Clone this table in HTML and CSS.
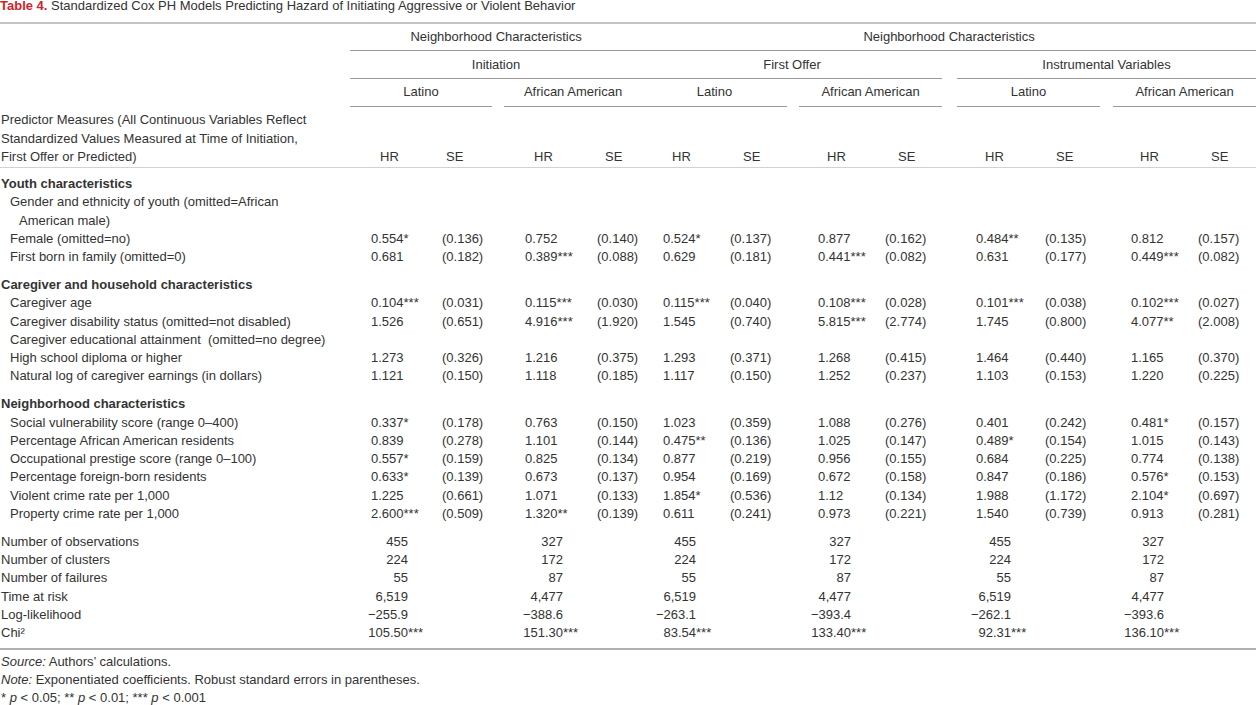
FILE: index.html
```html
<!DOCTYPE html>
<html lang="en">
<head>
<meta charset="utf-8">
<title>Table 4</title>
<link rel="stylesheet" href="styles.css">
</head>
<body>
<p class="caption"><span class="tlabel">Table 4.</span> Standardized Cox PH Models Predicting Hazard of Initiating Aggressive or Violent Behavior</p>
<table class="results">
  <colgroup>
    <col class="w-label">
    <col class="w-hr1"><col class="w-se1">
    <col class="w-hr2"><col class="w-se2">
    <col class="w-hr3"><col class="w-se3">
    <col class="w-hr4"><col class="w-se4">
    <col class="w-hr5"><col class="w-se5">
    <col class="w-hr6"><col class="w-se6">
  </colgroup>
  <thead>
    <tr class="h h1">
      <th></th>
      <th colspan="4"><div class="rule">Neighborhood Characteristics</div></th>
      <th colspan="8"><div class="rule">Neighborhood Characteristics</div></th>
    </tr>
    <tr class="h h2">
      <th></th>
      <th colspan="4"><div class="rule">Initiation</div></th>
      <th colspan="4"><div class="rule mr13">First Offer</div></th>
      <th colspan="4"><div class="rule ml2">Instrumental Variables</div></th>
    </tr>
    <tr class="h h3">
      <th></th>
      <th colspan="2"><div class="rule mr12">Latino</div></th>
      <th colspan="2"><div class="rule">African American</div></th>
      <th colspan="2"><div class="rule mr10">Latino</div></th>
      <th colspan="2"><div class="rule ml2 mr13">African American</div></th>
      <th colspan="2"><div class="rule ml2 mr10">Latino</div></th>
      <th colspan="2"><div class="rule ml3">African American</div></th>
    </tr>
    <tr class="h4">
      <th class="pred">Predictor Measures (All Continuous Variables Reflect<br>Standardized Values Measured at Time of Initiation,<br>First Offer or Predicted)</th>
      <th class="hr">HR</th><th class="se se-a">SE</th>
      <th class="hr">HR</th><th class="se se-b">SE</th>
      <th class="hr">HR</th><th class="se">SE</th>
      <th class="hr">HR</th><th class="se">SE</th>
      <th class="hr">HR</th><th class="se se-c">SE</th>
      <th class="hr">HR</th><th class="se">SE</th>
    </tr>
  </thead>
  <tbody>
    <tr class="sec first"><th colspan="13">Youth characteristics</th></tr>
    <tr><th class="lab wrapped">Gender and ethnicity of youth (omitted=African<br>American male)</th><td colspan="12"></td></tr>
    <tr><th class="lab">Female (omitted=no)</th>
      <td class="hr">0.554*</td><td class="se">(0.136)</td>
      <td class="hr">0.752</td><td class="se">(0.140)</td>
      <td class="hr">0.524*</td><td class="se">(0.137)</td>
      <td class="hr">0.877</td><td class="se">(0.162)</td>
      <td class="hr">0.484**</td><td class="se">(0.135)</td>
      <td class="hr">0.812</td><td class="se">(0.157)</td></tr>
    <tr><th class="lab">First born in family (omitted=0)</th>
      <td class="hr">0.681</td><td class="se">(0.182)</td>
      <td class="hr">0.389***</td><td class="se">(0.088)</td>
      <td class="hr">0.629</td><td class="se">(0.181)</td>
      <td class="hr">0.441***</td><td class="se">(0.082)</td>
      <td class="hr">0.631</td><td class="se">(0.177)</td>
      <td class="hr">0.449***</td><td class="se">(0.082)</td></tr>

    <tr class="sec"><th colspan="13">Caregiver and household characteristics</th></tr>
    <tr><th class="lab">Caregiver age</th>
      <td class="hr">0.104***</td><td class="se">(0.031)</td>
      <td class="hr">0.115***</td><td class="se">(0.030)</td>
      <td class="hr">0.115***</td><td class="se">(0.040)</td>
      <td class="hr">0.108***</td><td class="se">(0.028)</td>
      <td class="hr">0.101***</td><td class="se">(0.038)</td>
      <td class="hr">0.102***</td><td class="se">(0.027)</td></tr>
    <tr><th class="lab">Caregiver disability status (omitted=not disabled)</th>
      <td class="hr">1.526</td><td class="se">(0.651)</td>
      <td class="hr">4.916***</td><td class="se">(1.920)</td>
      <td class="hr">1.545</td><td class="se">(0.740)</td>
      <td class="hr">5.815***</td><td class="se">(2.774)</td>
      <td class="hr">1.745</td><td class="se">(0.800)</td>
      <td class="hr">4.077**</td><td class="se">(2.008)</td></tr>
    <tr><th class="lab">Caregiver educational attainment&nbsp; (omitted=no degree)</th><td colspan="12"></td></tr>
    <tr><th class="lab">High school diploma or higher</th>
      <td class="hr">1.273</td><td class="se">(0.326)</td>
      <td class="hr">1.216</td><td class="se">(0.375)</td>
      <td class="hr">1.293</td><td class="se">(0.371)</td>
      <td class="hr">1.268</td><td class="se">(0.415)</td>
      <td class="hr">1.464</td><td class="se">(0.440)</td>
      <td class="hr">1.165</td><td class="se">(0.370)</td></tr>
    <tr><th class="lab">Natural log of caregiver earnings (in dollars)</th>
      <td class="hr">1.121</td><td class="se">(0.150)</td>
      <td class="hr">1.118</td><td class="se">(0.185)</td>
      <td class="hr">1.117</td><td class="se">(0.150)</td>
      <td class="hr">1.252</td><td class="se">(0.237)</td>
      <td class="hr">1.103</td><td class="se">(0.153)</td>
      <td class="hr">1.220</td><td class="se">(0.225)</td></tr>

    <tr class="sec"><th colspan="13">Neighborhood characteristics</th></tr>
    <tr><th class="lab">Social vulnerability score (range 0–400)</th>
      <td class="hr">0.337*</td><td class="se">(0.178)</td>
      <td class="hr">0.763</td><td class="se">(0.150)</td>
      <td class="hr">1.023</td><td class="se">(0.359)</td>
      <td class="hr">1.088</td><td class="se">(0.276)</td>
      <td class="hr">0.401</td><td class="se">(0.242)</td>
      <td class="hr">0.481*</td><td class="se">(0.157)</td></tr>
    <tr><th class="lab">Percentage African American residents</th>
      <td class="hr">0.839</td><td class="se">(0.278)</td>
      <td class="hr">1.101</td><td class="se">(0.144)</td>
      <td class="hr">0.475**</td><td class="se">(0.136)</td>
      <td class="hr">1.025</td><td class="se">(0.147)</td>
      <td class="hr">0.489*</td><td class="se">(0.154)</td>
      <td class="hr">1.015</td><td class="se">(0.143)</td></tr>
    <tr><th class="lab">Occupational prestige score (range 0–100)</th>
      <td class="hr">0.557*</td><td class="se">(0.159)</td>
      <td class="hr">0.825</td><td class="se">(0.134)</td>
      <td class="hr">0.877</td><td class="se">(0.219)</td>
      <td class="hr">0.956</td><td class="se">(0.155)</td>
      <td class="hr">0.684</td><td class="se">(0.225)</td>
      <td class="hr">0.774</td><td class="se">(0.138)</td></tr>
    <tr><th class="lab">Percentage foreign-born residents</th>
      <td class="hr">0.633*</td><td class="se">(0.139)</td>
      <td class="hr">0.673</td><td class="se">(0.137)</td>
      <td class="hr">0.954</td><td class="se">(0.169)</td>
      <td class="hr">0.672</td><td class="se">(0.158)</td>
      <td class="hr">0.847</td><td class="se">(0.186)</td>
      <td class="hr">0.576*</td><td class="se">(0.153)</td></tr>
    <tr><th class="lab">Violent crime rate per 1,000</th>
      <td class="hr">1.225</td><td class="se">(0.661)</td>
      <td class="hr">1.071</td><td class="se">(0.133)</td>
      <td class="hr">1.854*</td><td class="se">(0.536)</td>
      <td class="hr">1.12</td><td class="se">(0.134)</td>
      <td class="hr">1.988</td><td class="se">(1.172)</td>
      <td class="hr">2.104*</td><td class="se">(0.697)</td></tr>
    <tr><th class="lab">Property crime rate per 1,000</th>
      <td class="hr">2.600***</td><td class="se">(0.509)</td>
      <td class="hr">1.320**</td><td class="se">(0.139)</td>
      <td class="hr">0.611</td><td class="se">(0.241)</td>
      <td class="hr">0.973</td><td class="se">(0.221)</td>
      <td class="hr">1.540</td><td class="se">(0.739)</td>
      <td class="hr">0.913</td><td class="se">(0.281)</td></tr>

    <tr class="stat gap"><th>Number of observations</th>
      <td class="hr">455</td><td></td><td class="hr">327</td><td></td><td class="hr">455</td><td></td>
      <td class="hr">327</td><td></td><td class="hr">455</td><td></td><td class="hr">327</td><td></td></tr>
    <tr class="stat"><th>Number of clusters</th>
      <td class="hr">224</td><td></td><td class="hr">172</td><td></td><td class="hr">224</td><td></td>
      <td class="hr">172</td><td></td><td class="hr">224</td><td></td><td class="hr">172</td><td></td></tr>
    <tr class="stat"><th>Number of failures</th>
      <td class="hr">55</td><td></td><td class="hr">87</td><td></td><td class="hr">55</td><td></td>
      <td class="hr">87</td><td></td><td class="hr">55</td><td></td><td class="hr">87</td><td></td></tr>
    <tr class="stat"><th>Time at risk</th>
      <td class="hr">6,519</td><td></td><td class="hr">4,477</td><td></td><td class="hr">6,519</td><td></td>
      <td class="hr">4,477</td><td></td><td class="hr">6,519</td><td></td><td class="hr">4,477</td><td></td></tr>
    <tr class="stat"><th>Log-likelihood</th>
      <td class="hr">−255.9</td><td></td><td class="hr">−388.6</td><td></td><td class="hr">−263.1</td><td></td>
      <td class="hr">−393.4</td><td></td><td class="hr">−262.1</td><td></td><td class="hr">−393.6</td><td></td></tr>
    <tr class="stat last"><th>Chi²</th>
      <td class="hr">105.50<span class="sig">***</span></td><td></td>
      <td class="hr">151.30<span class="sig">***</span></td><td></td>
      <td class="hr">83.54<span class="sig">***</span></td><td></td>
      <td class="hr">133.40<span class="sig">***</span></td><td></td>
      <td class="hr">92.31<span class="sig">***</span></td><td></td>
      <td class="hr">136.10<span class="sig">***</span></td><td></td></tr>
  </tbody>
</table>
<div class="notes">
  <p><em>Source:</em> Authors’ calculations.</p>
  <p><em>Note:</em> Exponentiated coefficients. Robust standard errors in parentheses.</p>
  <p>* <em>p</em> &lt; 0.05; ** <em>p</em> &lt; 0.01; *** <em>p</em> &lt; 0.001</p>
</div>
</body>
</html>
```
FILE: styles.css
```css
html, body {
  margin: 0;
  padding: 0;
  background: #fff;
}

body {
  font-family: "Liberation Sans", Arial, sans-serif;
  font-size: 13px;
  color: #333;
}

.caption {
  margin: 0 0 10px;
  line-height: 12px;
  white-space: nowrap;
}

.tlabel {
  color: #d2232a;
  font-weight: bold;
}

.results {
  width: 1256px;
  table-layout: fixed;
  border-collapse: separate;
  border-spacing: 0;
  border-top: 2px solid #c4c4c4;
}

.w-label { width: 350px; }
.w-hr1 { width: 92px; }
.w-se1 { width: 62px; }
.w-hr2 { width: 93px; }
.w-se2 { width: 45px; }
.w-hr3 { width: 88px; }
.w-se3 { width: 67px; }
.w-hr4 { width: 88px; }
.w-se4 { width: 70px; }
.w-hr5 { width: 90px; }
.w-se5 { width: 65px; }
.w-hr6 { width: 88px; }
.w-se6 { width: 58px; }

th {
  font-weight: normal;
}

th, td {
  padding: 0;
  white-space: nowrap;
}

/* spanning header rows */
.h th {
  padding-top: 4px;
}
.h2 th {
  padding-top: 5px;
}
.h .rule {
  line-height: 18px;
  padding-bottom: 4px;
  border-bottom: 1px solid #9a9a9a;
  text-align: center;
}
.h3 .rule {
  padding-bottom: 5px;
}
.mr10 { margin-right: 10px; }
.mr12 { margin-right: 12px; }
.mr13 { margin-right: 13px; }
.ml2 { margin-left: 2px; }
.ml3 { margin-left: 3px; }

/* column header row */
.h4 th {
  line-height: 18.5px;
  padding: 4px 0 0.5px;
  text-align: left;
  vertical-align: bottom;
  border-bottom: 1px solid #d2d2d2;
}
.h4 th.pred {
  padding-left: 1px;
}
.h4 th.hr {
  padding-left: 30px;
}
.h4 th.se {
  padding-left: 13px;
}
.h4 th.se-a { padding-left: 4px; }
.h4 th.se-b { padding-left: 8px; }
.h4 th.se-c { padding-left: 11px; }

/* body */
tbody th, tbody td {
  line-height: 18.3px;
  text-align: left;
}
tbody th {
  padding-left: 1px;
}
tbody th.lab {
  padding-left: 10px;
}
tbody th.wrapped {
  padding-left: 19px;
  text-indent: -9px;
}
tbody td.hr {
  padding-left: 21px;
}

.sec th {
  font-weight: bold;
  padding-top: 9.5px;
}
.sec.first th {
  padding-top: 7px;
}

.stat td.hr {
  padding-left: 0;
  padding-right: 34px;
  text-align: right;
}
.sig {
  display: inline-block;
  width: 0;
  text-align: left;
}
.gap > th, .gap > td {
  padding-top: 9.5px;
}
.last > th, .last > td {
  padding-bottom: 5px;
  border-bottom: 2px solid #b0b0b0;
}

.notes {
  margin-top: 3px;
  line-height: 18.3px;
  padding-left: 1px;
}
.notes p {
  margin: 0;
}
```
